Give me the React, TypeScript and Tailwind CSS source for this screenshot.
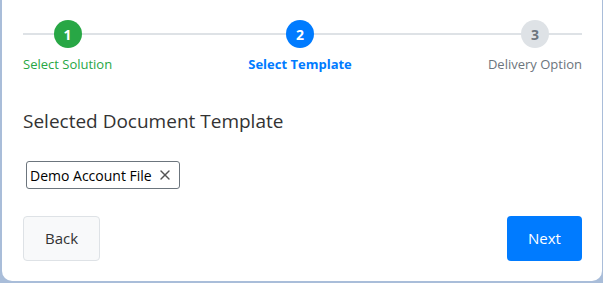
import { X } from "lucide-react";

const steps = [
    { n: 1, label: "Select Solution", state: "done" },
    { n: 2, label: "Select Template", state: "active" },
    { n: 3, label: "Delivery Option", state: "todo" },
];

export default function App() {
    return (
        <div className="w-[603px] h-[283px] bg-[#a9bdd9] pl-[2px] pr-[1px] pb-[2px]" style={{ fontFamily: '"Open Sans", "Noto Sans", sans-serif' }}>
            <div className="h-full bg-white rounded-b-[10px] pl-[21px] pr-[20px] pt-[20px] flex flex-col">
                {/* stepper */}
                <div className="relative flex justify-between">
                    <div className="absolute left-0 right-0 top-[13px] h-[2px] bg-[#dee2e6]" />
                    {steps.map((s) => (
                        <div key={s.n} className="relative flex flex-col items-center">
                            <div
                                className={
                                    s.state === "done"
                                        ? "w-[28px] h-[28px] rounded-full bg-[#28a745] text-white text-[14px] font-bold flex items-center justify-center"
                                        : s.state === "active"
                                        ? "w-[28px] h-[28px] rounded-full bg-[#007bff] text-white text-[14px] font-bold flex items-center justify-center"
                                        : "w-[28px] h-[28px] rounded-full bg-[#dee2e6] text-[#6c757d] text-[14px] font-bold flex items-center justify-center"
                                }
                            >
                                {s.n}
                            </div>
                            <div
                                className={
                                    s.state === "done"
                                        ? "mt-[7px] text-[13px] leading-[18px] text-[#28a745]"
                                        : s.state === "active"
                                        ? "mt-[7px] text-[13px] leading-[18px] font-bold text-[#007bff]"
                                        : "mt-[7px] text-[13px] leading-[18px] text-[#6c757d]"
                                }
                            >
                                {s.label}
                            </div>
                        </div>
                    ))}
                </div>

                <h2 className="mt-[36px] text-[19px] leading-[24px] text-[#333]">Selected Document Template</h2>

                <div className="mt-[28px] pl-[3px]">
                    <span className="inline-flex items-center h-[28px] border border-[#6c757d] rounded-[3px] pl-[3px] pr-[6px] text-[14px] text-black">
                        Demo Account File
                        <X className="ml-[5px] w-[16px] h-[16px] text-[#555]" strokeWidth={2} />
                    </span>
                </div>

                <div className="mt-[27px] flex justify-between">
                    <button className="w-[77px] h-[45px] bg-[#f8f9fa] border border-[#dee2e6] rounded-[4px] text-[15px] text-[#333]">Back</button>
                    <button className="w-[75px] h-[45px] bg-[#007bff] rounded-[4px] text-[15px] text-white">Next</button>
                </div>
            </div>
        </div>
    );
}
